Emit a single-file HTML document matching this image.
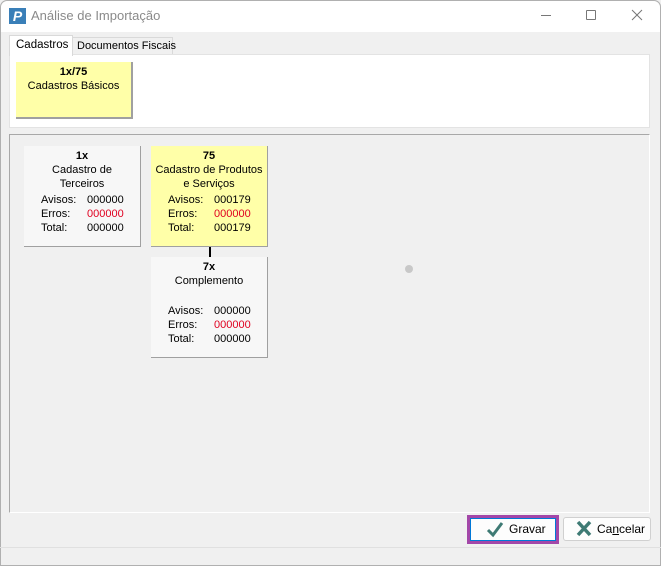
<!DOCTYPE html>
<html><head><meta charset="utf-8"><style>
*{margin:0;padding:0;box-sizing:border-box}
body{width:661px;height:566px;background:#f0f0f0;font-family:"Liberation Sans",sans-serif;font-size:11px;color:#000;position:relative;overflow:hidden}
.a{position:absolute;white-space:nowrap}
.card{position:absolute;width:117px;border-right:1px solid #a0a0a0;border-bottom:1px solid #a0a0a0;text-align:center;line-height:14px;padding-top:3px}
.row{display:flex;justify-content:center}
.row span:first-child{width:46px;text-align:left}
.row span:last-child{width:36px;text-align:left}
.rows{margin-top:2px}
.r{color:#e00020}
</style></head><body>
<div class="a" style="left:0;top:0;width:661px;height:566px;border:1px solid #b0b0b0;border-radius:7px 7px 0 0"></div>
<div class="a" style="border-radius:7px 7px 0 0;left:1px;top:1px;width:659px;height:31px;background:#fff"></div>
<div class="a" style="left:9px;top:8px;width:17px;height:16px;background:#3a7fb8;color:#fff;font-weight:bold;font-size:14px;line-height:16px;text-align:center;font-style:italic">P</div>
<div class="a" style="left:31px;top:8px;font-size:13px;color:#8a8a8a">Análise de Importação</div>
<div class="a" style="left:541px;top:15px;width:10px;height:1px;background:#777"></div>
<div class="a" style="left:586px;top:10px;width:10px;height:10px;border:1px solid #777;border-radius:1px"></div>
<svg class="a" style="left:631px;top:9px" width="12" height="12"><path d="M1 1L11 11M11 1L1 11" stroke="#777" stroke-width="1"/></svg>
<div class="a" style="left:72px;top:37px;width:101px;height:18px;background:#f0f0f0;border:1px solid #d9d9d9;border-bottom:none;padding:2px 0 0 4px;font-size:11px">Documentos Fiscais</div>
<div class="a" style="left:9px;top:54px;width:641px;height:74px;background:#fff;border:1px solid #e3e3e3"></div>
<div class="a" style="left:9px;top:35px;width:64px;height:21px;background:#fff;border:1px solid #d9d9d9;border-bottom:none;padding:3px 0 0 6px;font-size:11.5px">Cadastros</div>
<div class="card" style="left:16px;top:62px;height:57px;background:#ffffa8;border-right:2px solid #a0a0a0;border-bottom:2px solid #a0a0a0"><b>1x/75</b><br>Cadastros Básicos</div>
<div class="a" style="left:9px;top:134px;width:641px;height:379px;border:1px solid #a8a8a8;border-right-color:#fff;border-bottom-color:#fff"></div>
<div class="card" style="left:24px;top:146px;height:101px;background:#f7f7f7"><b>1x</b><br>Cadastro de<br>Terceiros
<div class="rows"><div class="row"><span>Avisos:</span><span>000000</span></div>
<div class="row"><span>Erros:</span><span class="r">000000</span></div>
<div class="row"><span>Total:</span><span>000000</span></div></div></div>
<div class="card" style="left:151px;top:146px;height:101px;background:#ffffa8"><b>75</b><br>Cadastro de Produtos<br>e Serviços
<div class="rows"><div class="row"><span>Avisos:</span><span>000179</span></div>
<div class="row"><span>Erros:</span><span class="r">000000</span></div>
<div class="row"><span>Total:</span><span>000179</span></div></div></div>
<div class="a" style="left:209px;top:247px;width:2px;height:10px;background:#000"></div>
<div class="card" style="left:151px;top:257px;height:101px;background:#f7f7f7"><b>7x</b><br>Complemento<br>&nbsp;
<div class="rows"><div class="row"><span>Avisos:</span><span>000000</span></div>
<div class="row"><span>Erros:</span><span class="r">000000</span></div>
<div class="row"><span>Total:</span><span>000000</span></div></div></div>
<div class="a" style="left:405px;top:265px;width:8px;height:8px;border-radius:50%;background:#c8c8c8"></div>
<div class="a" style="left:467px;top:515px;width:92px;height:29px;border:3px solid #a347a8"></div>
<div class="a" style="left:470px;top:518px;width:86px;height:23px;background:#fdfdfd;border:1px solid #0078d7;font-size:12px;line-height:21px;padding-left:38px">Gravar</div>
<svg class="a" style="left:486px;top:520px" width="18" height="18"><path d="M2 10L7 15L16 3" stroke="#3e7a74" stroke-width="3" fill="none"/></svg>
<div class="a" style="left:563px;top:517px;width:88px;height:24px;background:#fdfdfd;border:1px solid #d0d0d0;border-radius:3px;font-size:12px;line-height:22px;padding-left:33px">Ca<u>n</u>celar</div>
<svg class="a" style="left:576px;top:520px" width="16" height="17"><path d="M2 2L14 15M14 2L2 15" stroke="#3e7a74" stroke-width="3.5"/></svg>
<div class="a" style="left:0;top:547px;width:661px;height:1px;background:#e0e0e0"></div>
</body></html>
